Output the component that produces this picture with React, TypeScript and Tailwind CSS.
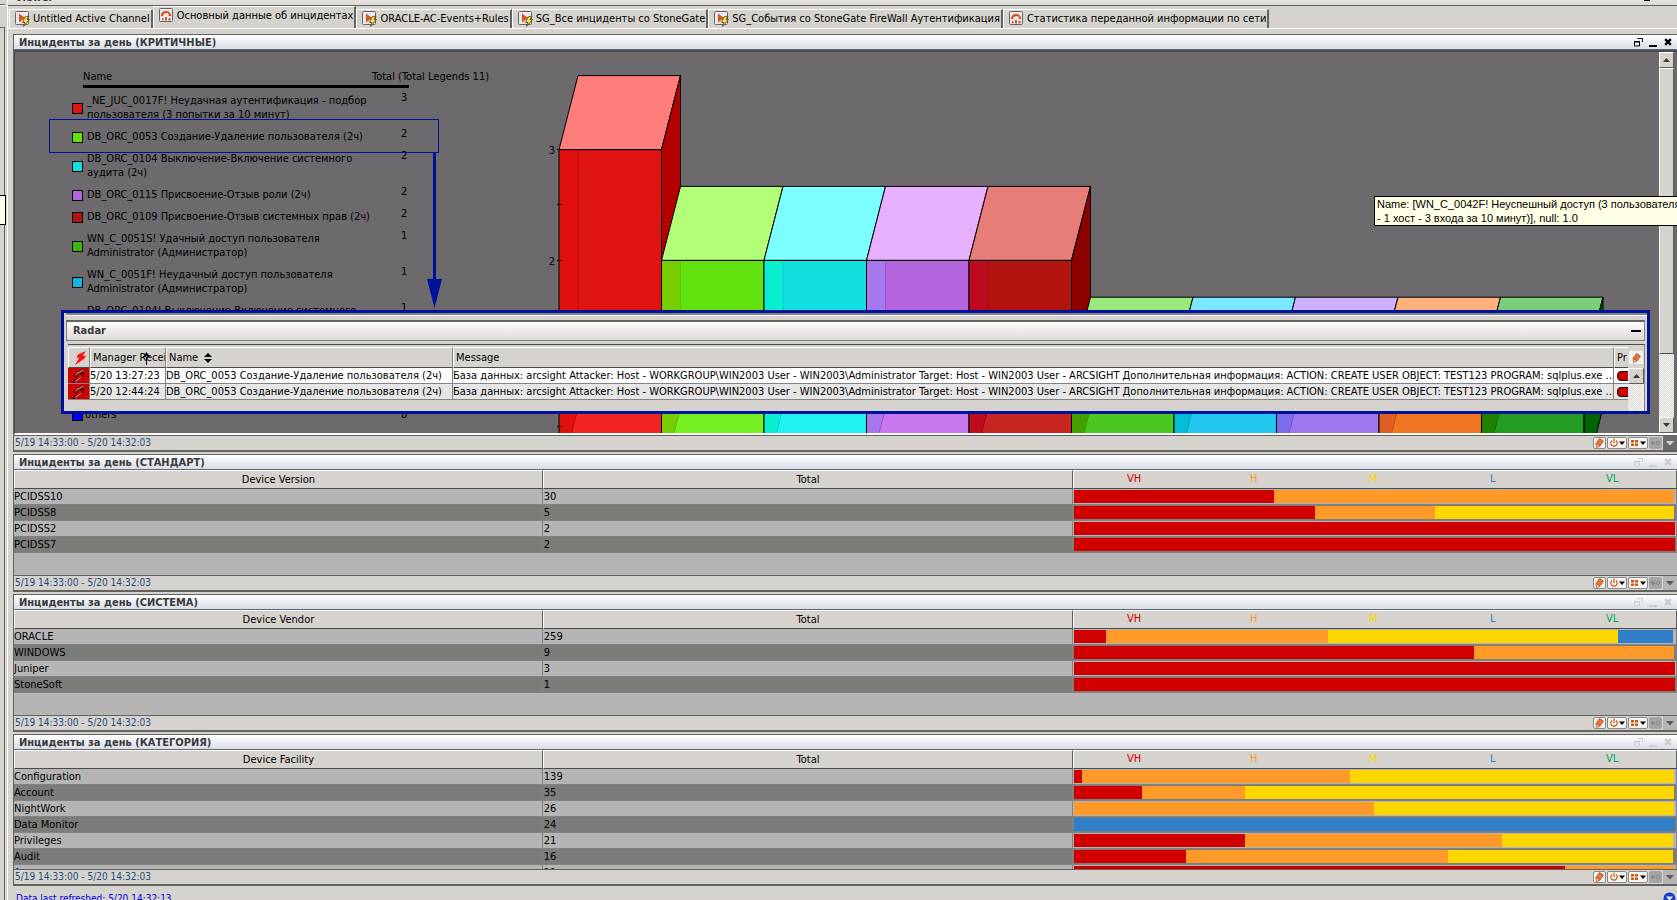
import type { ReactNode } from 'react'

type Level = 'VH' | 'H' | 'M' | 'L' | 'VL'

interface Segment {
  level: Level
  pct: number
}

interface StatRow {
  name: string
  total: number
  segments: Segment[]
}

const LEVELS: Level[] = ['VH', 'H', 'M', 'L', 'VL']

const LEVEL_BG: Record<Level, string> = {
  VH: 'bg-[#d00000]',
  H: 'bg-[#ff9a28]',
  M: 'bg-[#ffd700]',
  L: 'bg-[#307dc8]',
  VL: 'bg-[#00a565]',
}

const LEVEL_TEXT: Record<Level, string> = {
  VH: 'text-[#d00000]',
  H: 'text-[#ff9a28]',
  M: 'text-[#ffd700]',
  L: 'text-[#307dc8]',
  VL: 'text-[#00a565]',
}

const TABS: { label: string; icon: 'channel' | 'dashboard'; active?: boolean }[] = [
  { label: 'Untitled Active Channel', icon: 'channel' },
  { label: 'Основный данные об инцидентах', icon: 'dashboard', active: true },
  { label: 'ORACLE-AC-Events+Rules', icon: 'channel' },
  { label: 'SG_Все инциденты со StoneGate', icon: 'channel' },
  { label: 'SG_События со StoneGate FireWall Аутентификация', icon: 'channel' },
  { label: 'Статистика переданной информации по сети', icon: 'dashboard' },
]

const LEGEND = [
  { color: 'bg-[#df130f]', lines: ['_NE_JUC_0017F! Неудачная аутентификация - подбор', 'пользователя (3 попытки за 10 минут)'], total: 3 },
  { color: 'bg-[#62e20e]', lines: ['DB_ORC_0053 Создание-Удаление пользователя (2ч)'], total: 2 },
  { color: 'bg-[#12e0e0]', lines: ['DB_ORC_0104 Выключение-Включение системного', 'аудита (2ч)'], total: 2 },
  { color: 'bg-[#b464dc]', lines: ['DB_ORC_0115 Присвоение-Отзыв роли (2ч)'], total: 2 },
  { color: 'bg-[#b4140f]', lines: ['DB_ORC_0109 Присвоение-Отзыв системных прав (2ч)'], total: 2 },
  { color: 'bg-[#3cb60e]', lines: ['WN_C_0051S! Удачный доступ пользователя', 'Administrator (Администратор)'], total: 1 },
  { color: 'bg-[#12b4e0]', lines: ['WN_C_0051F! Неудачный доступ пользователя', 'Administrator (Администратор)'], total: 1 },
  { color: 'bg-[#8c64dc]', lines: ['DB_ORC_0104! Выключение-Включение системного', 'аудита (2ч)'], total: 1 },
]

const BARS = [
  { value: 3, top: '#ff7d7b', front: '#df130f', low: '#f02522', edge: '#df100e', line: '#c40a08', side: '#b40000' },
  { value: 2, top: '#b4ff78', front: '#62e20e', low: '#76f222', edge: '#76cd00', line: '#56c80a', side: '#3c9600' },
  { value: 2, top: '#7bffff', front: '#12e0e0', low: '#22f2f2', edge: '#08f0d0', line: '#0ccccc', side: '#009696' },
  { value: 2, top: '#e6b0ff', front: '#b464dc', low: '#c876ee', edge: '#a578ee', line: '#a04fd0', side: '#7830a0' },
  { value: 2, top: '#e67d78', front: '#b4140f', low: '#c62520', edge: '#be0b20', line: '#a00808', side: '#8c0000' },
  { value: 1, top: '#9be87b', front: '#3cb60e', low: '#4bc820', edge: '#44a000', line: '#349c0a', side: '#207800' },
  { value: 1, top: '#7be8ff', front: '#12b4e0', low: '#22c6ee', edge: '#00bcd4', line: '#0ca0c8', side: '#006c96' },
  { value: 1, top: '#cfb0ff', front: '#8c64dc', low: '#a076ee', edge: '#7c6cee', line: '#8050c8', side: '#5030a0' },
  { value: 1, top: '#ffb07b', front: '#e0640e', low: '#ee7622', edge: '#de5f20', line: '#c8500a', side: '#a03c00' },
  { value: 1, top: '#7bce7b', front: '#128c12', low: '#229c22', edge: '#228200', line: '#0a780a', side: '#006400' },
]

const STANDARD: StatRow[] = [
  { name: 'PCIDSS10', total: 30, segments: [{ level: 'VH', pct: 33.3 }, { level: 'H', pct: 66.5 }] },
  { name: 'PCIDSS8', total: 5, segments: [{ level: 'VH', pct: 40 }, { level: 'H', pct: 20 }, { level: 'M', pct: 39.8 }] },
  { name: 'PCIDSS2', total: 2, segments: [{ level: 'VH', pct: 100 }] },
  { name: 'PCIDSS7', total: 2, segments: [{ level: 'VH', pct: 100 }] },
]

const SYSTEM: StatRow[] = [
  { name: 'ORACLE', total: 259, segments: [{ level: 'VH', pct: 5.3 }, { level: 'H', pct: 37 }, { level: 'M', pct: 48.2 }, { level: 'L', pct: 9.2 }] },
  { name: 'WINDOWS', total: 9, segments: [{ level: 'VH', pct: 66.5 }, { level: 'H', pct: 33.3 }] },
  { name: 'Juniper', total: 3, segments: [{ level: 'VH', pct: 100 }] },
  { name: 'StoneSoft', total: 1, segments: [{ level: 'VH', pct: 100 }] },
]

const CATEGORY: StatRow[] = [
  { name: 'Configuration', total: 139, segments: [{ level: 'VH', pct: 1.3 }, { level: 'H', pct: 44.6 }, { level: 'M', pct: 53.9 }] },
  { name: 'Account', total: 35, segments: [{ level: 'VH', pct: 11.3 }, { level: 'H', pct: 17.1 }, { level: 'M', pct: 71.4 }] },
  { name: 'NightWork', total: 26, segments: [{ level: 'H', pct: 49.9 }, { level: 'M', pct: 49.9 }] },
  { name: 'Data Monitor', total: 24, segments: [{ level: 'L', pct: 100 }] },
  { name: 'Privileges', total: 21, segments: [{ level: 'VH', pct: 28.4 }, { level: 'H', pct: 42.8 }, { level: 'M', pct: 28.5 }] },
  { name: 'Audit', total: 16, segments: [{ level: 'VH', pct: 18.6 }, { level: 'H', pct: 43.6 }, { level: 'M', pct: 37.5 }] },
  { name: 'Access', total: 11, segments: [{ level: 'VH', pct: 81.7 }, { level: 'H', pct: 18.1 }] },
]

const RADAR_MESSAGE =
  'База данных: arcsight Attacker: Host - WORKGROUP\\WIN2003 User - WIN2003\\Administrator Target: Host - WIN2003 User - ARCSIGHT Дополнительная информация: ACTION: CREATE USER OBJECT: TEST123 PROGRAM: sqlplus.exe ...'

const RADAR_ROWS = [
  { time: '5/20 13:27:23', bg: 'bg-white' },
  { time: '5/20 12:44:24', bg: 'bg-[#e6e6e6]' },
]

function TabIcon({ kind }: { kind: 'channel' | 'dashboard' }) {
  return (
    <svg width="15" height="16" viewBox="0 0 15 16" aria-hidden="true" className="shrink-0">
      <rect x="0.5" y="0.5" width="13" height="13" rx="1" fill="#e6e8ee" stroke="#62666c" />
      {kind === 'channel' ? (
        <>
          <path d="M4 2.500v9l6-4.500z" fill="#d8551c" />
          <path d="M10 6 14 5l-2 3.500h2.500L8.500 15.500l1.500-4H7.500z" fill="#ffe04a" stroke="#4a3c10" strokeWidth="0.8" />
        </>
      ) : (
        <>
          <path d="M3 8a4 4 0 0 1 8 0" fill="none" stroke="#d8551c" strokeWidth="2.400" />
          <path d="M7 8 9 5" stroke="#fff" />
          <path d="M3 10h1.500v2.500H3zM6 9h2v3.500H6zM9.500 10h2v2.500h-2z" fill="#d8551c" />
        </>
      )}
    </svg>
  )
}

function PencilIcon() {
  return (
    <svg width="11" height="12" viewBox="0 0 11 12" aria-hidden="true">
      <path d="M5.500 1.500 9.500 4 6 9 2 6.500z" fill="#e8743c" stroke="#b84a10" strokeWidth="0.800" />
      <path d="M2 6.500 6 9 2.500 10.500z" fill="#ffe0c8" stroke="#b84a10" strokeWidth="0.800" />
    </svg>
  )
}

function SmallButton({ label, wide, children }: { label: string; wide?: boolean; children: ReactNode }) {
  return (
    <button
      type="button"
      aria-label={label}
      className={`flex h-3 items-center justify-center rounded-[2px] border border-[#8a8a8a] bg-[#f4f3f1] ${wide ? 'w-5' : 'w-[13px]'}`}
    >
      {children}
    </button>
  )
}

function PanelFooter({ active }: { active?: boolean }) {
  return (
    <footer className="flex h-[15px] shrink-0 items-center justify-between border-t border-[#62655f] pl-px">
      <span className="text-[10px] leading-[14px] text-[#1e4a7c]">5/19 14:33:00 - 5/20 14:32:03</span>
      <div className="flex items-center gap-px">
        <SmallButton label="Edit">
          <PencilIcon />
        </SmallButton>
        <SmallButton label="Status" wide>
          <svg width="17" height="10" viewBox="0 0 17 10" aria-hidden="true">
            <path d="M3 2.500a3.200 3.200 0 1 0 4 0M5 .5v4.500" fill="none" stroke="#c85a14" strokeWidth="1.200" />
            <path d="M10 3.500h6l-3 3.500z" />
          </svg>
        </SmallButton>
        <SmallButton label="View" wide>
          <svg width="17" height="10" viewBox="0 0 17 10" aria-hidden="true">
            <path d="M1 2h3v2.500H1zM5 2h3v2.500H5zM1 5.500h3V8H1zM5 5.500h3V8H5z" fill="#c85a14" />
            <path d="M10 3.500h6l-3 3.500z" />
          </svg>
        </SmallButton>
        <button type="button" aria-label="Link" disabled className="flex h-3 w-[13px] items-center justify-center rounded-[2px] bg-[#a5a5a8]">
          <svg width="11" height="6" viewBox="0 0 11 6" aria-hidden="true">
            <circle cx="3" cy="3" r="2" fill="#8a8a8c" />
            <circle cx="8" cy="3" r="1.700" fill="none" stroke="#8a8a8c" />
          </svg>
        </button>
        <button
          type="button"
          aria-label="More"
          className={`flex h-[14px] w-[14px] items-center justify-center ${active ? 'bg-[#6c6a6c]' : 'bg-[#b5b5b5]'}`}
        >
          <svg width="10" height="6" viewBox="0 0 10 6" aria-hidden="true">
            <path d="M1 1h8L5 5.500z" fill={active ? '#d6d3ce' : '#5c5c5c'} />
          </svg>
        </button>
      </div>
    </footer>
  )
}

function Panel({ title, active, children }: { title: string; active?: boolean; children: ReactNode }) {
  return (
    <section className="mt-[2px] shrink-0 border-t border-b-2 border-l border-[#62655f] first:mt-0">
      <header className="flex h-[15px] items-center justify-between border-b border-[#5f6b78] bg-linear-to-b from-white to-[#d8dde6] pr-[5px] pl-[5px]">
        <h2 className="text-[11px] leading-[15px] font-bold text-[#3a3a3a]">{title}</h2>
        <div className={`flex items-center gap-[6px] ${active ? 'text-black' : 'text-[#cdcdcd]'}`}>
          <button type="button" aria-label="Restore">
            <svg width="9" height="9" viewBox="0 0 9 9" aria-hidden="true" className="block">
              <path d="M.5 3.500h5v4.500h-5zM3.500.5h5v3.500" fill="none" stroke="currentColor" />
              <path d="M0 3h6v1.500H0z" fill="currentColor" />
            </svg>
          </button>
          <button type="button" aria-label="Minimize">
            <svg width="9" height="9" viewBox="0 0 9 9" aria-hidden="true" className="block">
              <path d="M0 7h8v2H0z" fill="currentColor" />
            </svg>
          </button>
          <button type="button" aria-label="Close">
            <svg width="8" height="8" viewBox="0 0 8 8" aria-hidden="true" className="block">
              <path d="M1.200 1.200 6.800 6.800M6.800 1.200 1.200 6.800" stroke="currentColor" strokeWidth="2.400" />
            </svg>
          </button>
        </div>
      </header>
      {children}
      <PanelFooter active={active} />
    </section>
  )
}

function StatTable({ heading, rows, bodyHeight }: { heading: string; rows: StatRow[]; bodyHeight: string }) {
  const th = 'h-[19px] border-t border-r border-b border-l border-t-white border-r-[#5c5c5c] border-b-[#4a4a4a] border-l-white bg-[#d6d3ce] p-0 font-normal'
  return (
    <div className={`overflow-hidden bg-[#b5b5b5] ${bodyHeight}`}>
      <table className="w-full table-fixed border-separate border-spacing-0">
        <colgroup>
          <col className="w-[31.8%]" />
          <col className="w-[31.9%]" />
          <col />
        </colgroup>
        <thead>
          <tr>
            <th className={th}>{heading}</th>
            <th className={th}>Total</th>
            <th className={th}>
              <div className="mr-1 grid grid-cols-5 pb-[2px] leading-[14px]">
                {LEVELS.map((level) => (
                  <span key={level} className={LEVEL_TEXT[level]}>
                    {level}
                  </span>
                ))}
              </div>
            </th>
          </tr>
        </thead>
        <tbody>
          {rows.map((row) => (
            <tr key={row.name} className="h-4 even:bg-[#7b7d79]">
              <td className="border-r border-b border-[#848284] p-0 leading-[15px]">{row.name}</td>
              <td className="border-r border-b border-[#848284] p-0 pl-px leading-[15px]">{row.total}</td>
              <td className="border-r border-b border-[#848284] p-0 px-px">
                <div className="flex h-[13px]">
                  {row.segments.map((seg) => (
                    <div key={seg.level} className={LEVEL_BG[seg.level]} style={{ width: `${seg.pct}%` }} />
                  ))}
                </div>
              </td>
            </tr>
          ))}
        </tbody>
      </table>
    </div>
  )
}

function Legend() {
  return (
    <div className="w-[526px] shrink-0 pt-[17px] pl-[57px]">
      <div className="ml-[11px] flex w-[326px] border-b-3 border-black pb-px leading-[15px]">
        <span className="flex-1">Name</span>
        <span className="w-[37px] whitespace-nowrap">Total (Total Legends 11)</span>
      </div>
      <ul className="pt-[6px]">
        {LEGEND.map((item) => (
          <li key={item.lines[0]} className="flex items-center pb-2">
            <span className={`h-[11px] w-[11px] border border-black ${item.color}`} />
            <span className="w-[318px] pl-1 leading-[14px] whitespace-nowrap">
              {item.lines.map((line) => (
                <span key={line} className="block">
                  {line}
                </span>
              ))}
            </span>
            <span className="-mt-[3px] self-start leading-[14px]">{item.total}</span>
          </li>
        ))}
      </ul>
      <div className="flex items-center pt-[68px]">
        <span className="h-[11px] w-[11px] border border-black bg-[#0000ff]" />
        <span className="w-[318px] pl-[2px] leading-[14px]">others</span>
        <span className="leading-[14px]">8</span>
      </div>
    </div>
  )
}

// Geometry of the oblique projection used by the bar chart
const X0 = 18
const BAR_W = 102.5
const DX = 19
const DY = 74
const ZERO = 430
const UNIT = 110.8

function BarChart() {
  return (
    <svg viewBox="0 0 1118 381" preserveAspectRatio="xMinYMin slice" className="block h-full min-w-0 flex-1" role="img" aria-label="Total">
      {BARS.map((bar, i) => {
        const x = X0 + i * BAR_W
        const r = x + BAR_W
        const y = ZERO - bar.value * UNIT
        const next = BARS[i + 1]
        const drop = !next || next.value < bar.value
        return (
          <g key={i}>
            <rect x={x} y={y} width={BAR_W} height={ZERO - y} fill={bar.front} />
            <path d={`M${x} ${ZERO}L${x + DX} ${ZERO - DY}H${r}V${ZERO}z`} fill={bar.low} />
            <path d={`M${x} ${y}H${x + DX}V${ZERO - DY}L${x} ${ZERO}z`} fill={bar.edge} />
            <path d={`M${x + DX} ${y}V${ZERO - DY}L${x} ${ZERO}`} fill="none" stroke={bar.line} />
            <path d={`M${x} ${y}L${x + DX} ${y - DY}H${r + DX}L${r} ${y}z`} fill={bar.top} stroke="#000" />
            {drop && (
              <path d={`M${r} ${y}L${r + DX} ${y - DY}V${ZERO - DY}L${r} ${ZERO}z`} fill={bar.side} stroke="#000" />
            )}
            <rect x={x} y={y} width={BAR_W} height={ZERO - y} fill="none" stroke="#000" />
          </g>
        )
      })}
      <path d="M16 97.500h5M16 152.500h5M16 208.500h5M16 374.500h5" stroke="#000" />
      <g fontSize="11" textAnchor="end">
        <text x="14" y="102">3</text>
        <text x="14" y="213">2</text>
      </g>
    </svg>
  )
}

const CHECKER = 'bg-[repeating-conic-gradient(#ffffff_0_25%,#d6d3ce_0_50%)] bg-[length:2px_2px]'

function ArrowButton({ dir }: { dir: 'up' | 'down' }) {
  return (
    <button
      type="button"
      aria-label={dir === 'up' ? 'Scroll up' : 'Scroll down'}
      className="flex h-4 w-full shrink-0 items-center justify-center border border-t-white border-r-[#5c5c5c] border-b-[#5c5c5c] border-l-white bg-[#d6d3ce]"
    >
      <svg width="7" height="4" viewBox="0 0 7 4" aria-hidden="true">
        <path d={dir === 'up' ? 'M0 4h7L3.500 0z' : 'M0 0h7L3.500 4z'} fill="#3a3a3a" />
      </svg>
    </button>
  )
}

function Bolt({ outlined }: { outlined?: boolean }) {
  return (
    <svg width="13" height="14" viewBox="0 0 13 14" aria-hidden="true" className="mx-auto block">
      <path
        d="M12 0 4 3.500 2.500 7l3-.5L1 14l9.500-6.500L12 4.500l-3.500.5z"
        fill={outlined ? '#c80000' : '#ff0c0c'}
        stroke={outlined ? '#000' : 'none'}
        strokeWidth="0.900"
      />
      {outlined && <path d="M11.500 1 5 4.200 3.500 6.500M9.500 8 3 12.500" fill="none" stroke="#d8d8d8" strokeWidth="0.800" />}
    </svg>
  )
}

function Radar() {
  const th = 'h-[21px] overflow-hidden border-t border-r border-b border-l border-t-white border-r-[#848284] border-b-[#4a4a4a] border-l-white p-0 pl-[2px] text-left font-normal whitespace-nowrap'
  const td = 'overflow-hidden border-r border-b border-[#848284] p-0 leading-[15px] whitespace-nowrap'
  return (
    <section className="absolute top-[258px] right-[27px] left-[46px] flex h-[104px] flex-col overflow-hidden border-3 border-[#00129a] bg-[#d6d3ce]">
      <div className="ml-[2px] h-[7px] shrink-0 border-t-2 border-b-4 border-t-[#848284] border-b-[#d6d3ce] bg-white" />
      <header className="mr-[2px] ml-[2px] flex h-[21px] shrink-0 items-center justify-between border-t-2 border-r border-b border-l border-[#848284] border-t-[#62655f] bg-linear-to-b from-white to-[#dcd8d4] pr-px pb-px pl-[6px]">
        <h3 className="text-[11px] font-bold text-[#3a3a3a]">Radar</h3>
        <button type="button" aria-label="Collapse" className="flex h-3 w-3 items-center">
          <span className="h-[2px] w-[10px] bg-black" />
        </button>
      </header>
      <div className="mt-[3px] mr-[2px] ml-1 flex flex-1 overflow-hidden border-t border-r border-t-[#4a4a4a] border-r-[#848284] pt-[2px]">
        <div className="min-w-0 flex-1 overflow-hidden">
          <table className="w-full table-fixed border-separate border-spacing-0">
            <colgroup>
              <col className="w-[22px]" />
              <col className="w-[76px]" />
              <col className="w-[287px]" />
              <col />
              <col className="w-[14px]" />
            </colgroup>
            <thead>
              <tr>
                <th className={th} aria-label="Priority flag">
                  <Bolt />
                </th>
                <th className={th}>
                  <span className="relative block overflow-hidden">
                    Manager Receipt
                    <svg width="7" height="13" viewBox="0 0 7 13" className="absolute top-px left-[50px]" aria-hidden="true">
                      <path d="M3.500 0 0 5h7zM3 4h1v9H3z" />
                    </svg>
                  </span>
                </th>
                <th className={th}>
                  <span className="flex items-center gap-[6px]">
                    Name
                    <svg width="8" height="10" viewBox="0 0 8 10" aria-hidden="true">
                      <path d="M4 0l4 4H0zM4 10l4-4H0z" />
                    </svg>
                  </span>
                </th>
                <th className={th}>Message</th>
                <th className={`${th} border-r-0`}>Pr</th>
              </tr>
            </thead>
            <tbody>
              {RADAR_ROWS.map((row) => (
                <tr key={row.time} className={`h-4 ${row.bg}`}>
                  <td className={`${td} bg-[#d00000]`}>
                    <Bolt outlined />
                  </td>
                  <td className={td}>{row.time}</td>
                  <td className={td}>DB_ORC_0053 Создание-Удаление пользователя (2ч)</td>
                  <td className={td}>{RADAR_MESSAGE}</td>
                  <td className="overflow-hidden border-b border-[#848284] p-0">
                    <span className="ml-[3px] block h-[10px] w-5 rounded-l-[4px] border border-black bg-[#d00000]" />
                  </td>
                </tr>
              ))}
            </tbody>
          </table>
        </div>
        <div className="flex w-4 shrink-0 flex-col">
          <button type="button" aria-label="Edit columns" className="mx-px mt-1 mb-1 flex h-[13px] shrink-0 items-center justify-center bg-[#f4f3f1]">
            <PencilIcon />
          </button>
          <ArrowButton dir="up" />
          <div className={`flex-1 ${CHECKER}`} />
        </div>
      </div>
    </section>
  )
}

function ChartPanel() {
  return (
    <Panel title="Инциденты за день (КРИТИЧНЫЕ)" active>
      <div className="relative flex h-[385px] border-t-2 border-b-2 border-l border-t-[#4a4a4a] border-b-white border-l-[#4a4a4a] bg-[#6c6a6c]">
        <Legend />
        <BarChart />
        <div className="mr-[3px] flex w-[15px] shrink-0 flex-col">
          <ArrowButton dir="up" />
          <div className="h-[286px] shrink-0 border border-t-white border-r-[#5c5c5c] border-b-[#4a4a4a] border-l-white bg-[#d6d3ce]" />
          <div className={`flex-1 ${CHECKER}`} />
          <ArrowButton dir="down" />
        </div>

        {/* call-out from the selected legend entry down to the radar rows */}
        <div className="absolute top-[67px] left-[34px] h-[34px] w-[390px] border border-[#00129a]" />
        <svg width="15" height="156" viewBox="0 0 15 156" className="absolute top-[101px] left-[412px]" aria-hidden="true">
          <path d="M6 0h3v126h6L7.500 155 0 126h6z" fill="#00129a" />
        </svg>
        <Radar />

        <div
          role="tooltip"
          className="absolute top-[144px] right-0 h-[30px] w-[303px] overflow-hidden border-y border-l border-black bg-[#ffffe6] pl-[2px] font-['Liberation_Sans',sans-serif] leading-[14px] whitespace-nowrap"
        >
          Name: [WN_C_0042F! Неуспешный доступ (3 пользователя
          <br />- 1 хост - 3 входа за 10 минут)], null: 1.0
        </div>
      </div>
    </Panel>
  )
}

export default function App() {
  return (
    <div className="relative flex h-screen overflow-hidden bg-[#d6d3ce] font-['DejaVu_Sans_Condensed','Noto_Sans',sans-serif] text-[11px] leading-[14px] text-black">
      <aside className="w-[5px] shrink-0">
        <div className="h-[5px] border-b border-[#62655f]" />
        <div className="h-[22px] border-t border-white" />
        <div className="h-full border-t border-r border-[#62655f]" />
      </aside>

      <main className="ml-[2px] flex min-w-0 flex-1 flex-col border-l border-white">
        <div className="flex h-[6px] shrink-0 items-end justify-between overflow-hidden border-b border-[#62655f] bg-linear-to-b from-[#e6e2de] to-[#dcd8d4] pr-[27px] pl-[7px]">
          <span className="text-[11px] leading-[14px] font-bold text-[#3a3a3a]">Viewer</span>
          <span className="mb-1 h-px w-[6px] bg-black" />
        </div>

        <nav className="flex h-[23px] shrink-0 items-end border-b border-white pl-px" role="tablist">
          {TABS.map((tab) => (
            <button
              key={tab.label}
              type="button"
              role="tab"
              aria-selected={!!tab.active}
              className={`flex items-center gap-[3px] border-t border-r-2 border-l border-t-white border-r-[#62655f] border-l-white pr-px pl-[5px] whitespace-nowrap ${
                tab.active ? 'h-[22px] rounded-tl-[2px] pb-1' : 'h-[19px]'
              }`}
            >
              <TabIcon kind={tab.icon} />
              {tab.label}
            </button>
          ))}
        </nav>

        <div className="flex shrink-0 flex-col pt-[5px] pl-[5px]">
          <ChartPanel />
          <Panel title="Инциденты за день (СТАНДАРТ)">
            <StatTable heading="Device Version" rows={STANDARD} bodyHeight="h-[105px]" />
          </Panel>
          <Panel title="Инциденты за день (СИСТЕМА)">
            <StatTable heading="Device Vendor" rows={SYSTEM} bodyHeight="h-[105px]" />
          </Panel>
          <Panel title="Инциденты за день (КАТЕГОРИЯ)">
            <StatTable heading="Device Facility" rows={CATEGORY} bodyHeight="h-[119px]" />
          </Panel>
        </div>

        <div className="flex justify-between pt-[6px] pl-2 text-[10px] text-[#0000e6]">
          <span>Data last refreshed: 5/20 14:32:13</span>
          <svg width="13" height="13" viewBox="0 0 13 13" className="mr-px" aria-hidden="true">
            <circle cx="6.500" cy="6.500" r="6" fill="#1c3cc8" />
            <path d="M3 4.500h7L6.500 9z" fill="#d8ecff" />
          </svg>
        </div>
      </main>

      <div className="absolute top-[195px] left-0 h-[30px] w-[6px] border-y border-r border-black bg-[#ffffe6]" />
    </div>
  )
}
